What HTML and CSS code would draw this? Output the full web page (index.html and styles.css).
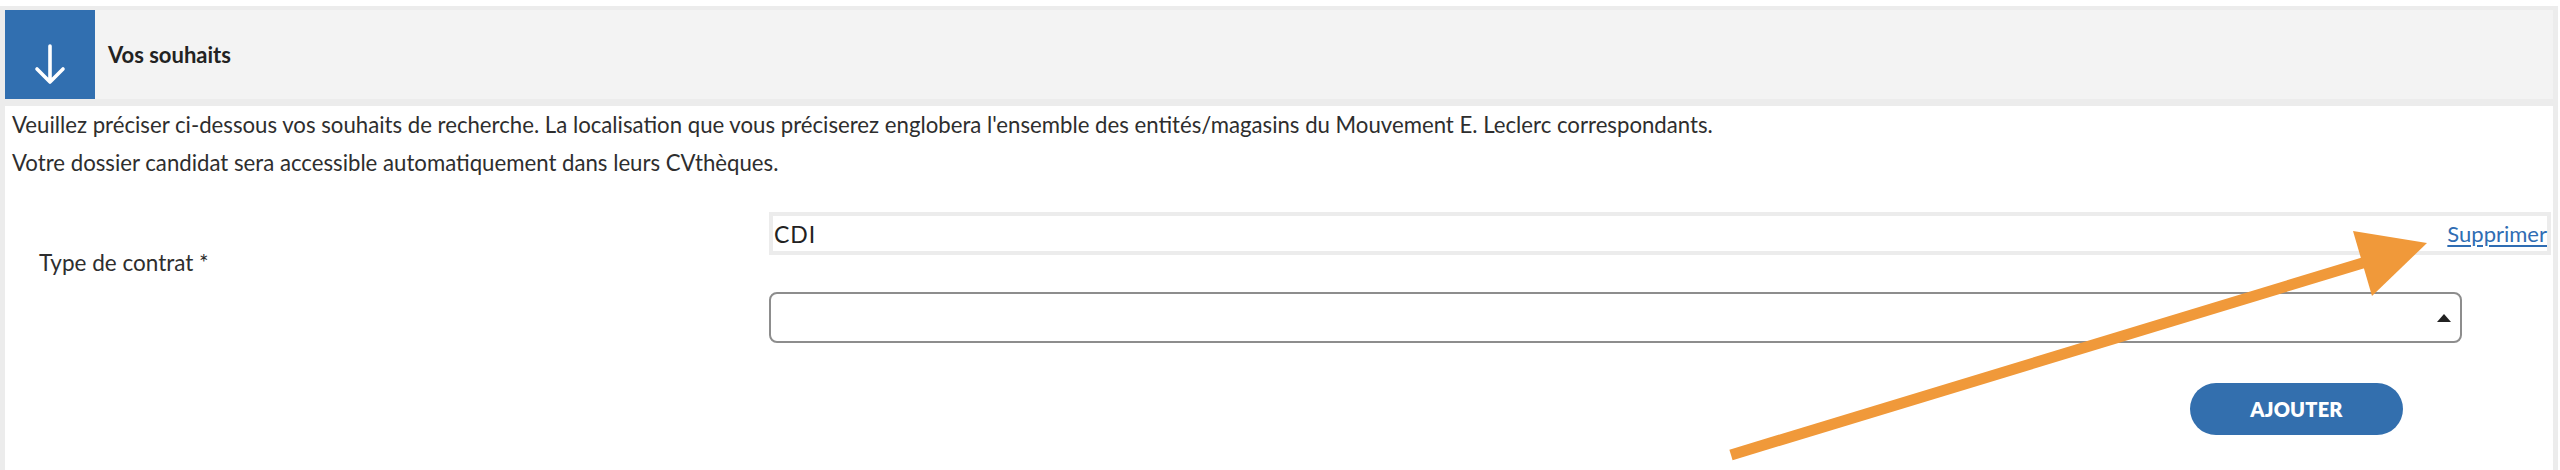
FILE: index.html
```html
<!DOCTYPE html>
<html lang="fr">
<head>
<meta charset="utf-8">
<title>Vos souhaits</title>
<link rel="stylesheet" href="styles.css">
</head>
<body>
<div class="panel">
  <div class="head">
    <div class="icon">
      <svg width="90" height="89" viewBox="0 0 90 89">
        <path d="M45 36 V72 M32 59 L45 72 L58 59" fill="none" stroke="#fff" stroke-width="3.6" stroke-linecap="round" stroke-linejoin="round"/>
      </svg>
    </div>
    <h2 class="title">Vos souhaits</h2>
  </div>
  <div class="content">
    <p class="intro">Veuillez préciser ci-dessous vos souhaits de recherche. La localisation que vous préciserez englobera l'ensemble des entités/magasins du Mouvement E. Leclerc correspondants.<br>Votre dossier candidat sera accessible automatiquement dans leurs CVthèques.</p>
    <div class="field">
      <label class="label">Type de contrat *</label>
      <div class="control">
        <div class="tag"><span class="tag-text">CDI</span><a class="remove" href="#">Supprimer</a></div>
        <div class="select"><span class="caret"></span></div>
        <div class="actions"><button class="btn" type="button">AJOUTER</button></div>
      </div>
    </div>
  </div>
</div>
<svg class="pointer" width="2560" height="470" viewBox="0 0 2560 470">
  <line x1="1731" y1="455" x2="2366" y2="262" stroke="#f0993a" stroke-width="11"/>
  <polygon points="2427,243 2353,231 2372,296" fill="#f0993a"/>
</svg>
</body>
</html>
```
FILE: styles.css
```css
html, body {
  margin: 0;
  padding: 0;
  background: #fff;
}
body {
  position: relative;
  height: 470px;
  overflow: hidden;
  font-family: Lato, "Open Sans", sans-serif;
  color: #2e2e2e;
}
.panel {
  box-sizing: border-box;
  margin-top: 6px;
  width: 2558px;
  height: 464px;
  padding: 4px 5px 0 5px;
  background: #ececec;
  display: flex;
  flex-direction: column;
}
.head {
  display: flex;
  align-items: center;
  flex: 0 0 89px;
  background: #f3f3f3;
  margin-bottom: 7px;
}
.icon {
  width: 90px;
  height: 89px;
  background: #316fb0;
  display: flex;
}
.title {
  margin: 0 0 0 13px;
  font-size: 22px;
  font-weight: 700;
  color: #222;
}
.content {
  background: #fff;
  flex: 1;
  min-height: 0;
}
.intro {
  margin: 0;
  padding: 0 0 0 7px;
  font-size: 22.2px;
  line-height: 37.5px;
}
.field {
  display: grid;
  grid-template-columns: 764px 1fr;
  margin-top: 31px;
  padding-right: 2px;
}
.label {
  padding: 32px 0 0 34px;
  font-size: 22.5px;
  line-height: 38px;
}
.control {
  display: flex;
  flex-direction: column;
}
.tag {
  box-sizing: border-box;
  height: 43px;
  border: 4px solid #ececec;
  display: flex;
  align-items: center;
  justify-content: space-between;
  padding: 0 0 0 1px;
}
.tag-text {
  font-size: 23px;
  letter-spacing: 1px;
  color: #222;
}
.remove {
  font-size: 22px;
  color: #2f6db3;
  text-decoration: underline;
  text-underline-offset: 3px;
}
.select {
  box-sizing: border-box;
  margin-top: 37px;
  width: 1693px;
  height: 51px;
  border: 2px solid #8d8d8d;
  border-radius: 8px;
  display: flex;
  align-items: center;
  justify-content: flex-end;
  padding-right: 9px;
}
.caret {
  width: 0;
  height: 0;
  border-left: 7px solid transparent;
  border-right: 7px solid transparent;
  border-bottom: 8px solid #222;
}
.actions {
  display: flex;
  justify-content: flex-end;
  margin-top: 40px;
  padding-right: 148px;
}
.btn {
  width: 213px;
  height: 52px;
  border: none;
  border-radius: 26px;
  background: #336fae;
  color: #fff;
  font-family: Lato, sans-serif;
  font-weight: 800;
  font-size: 20px;
  letter-spacing: 0.2px;
}
.pointer {
  position: absolute;
  left: 0;
  top: 0;
  pointer-events: none;
}
```
